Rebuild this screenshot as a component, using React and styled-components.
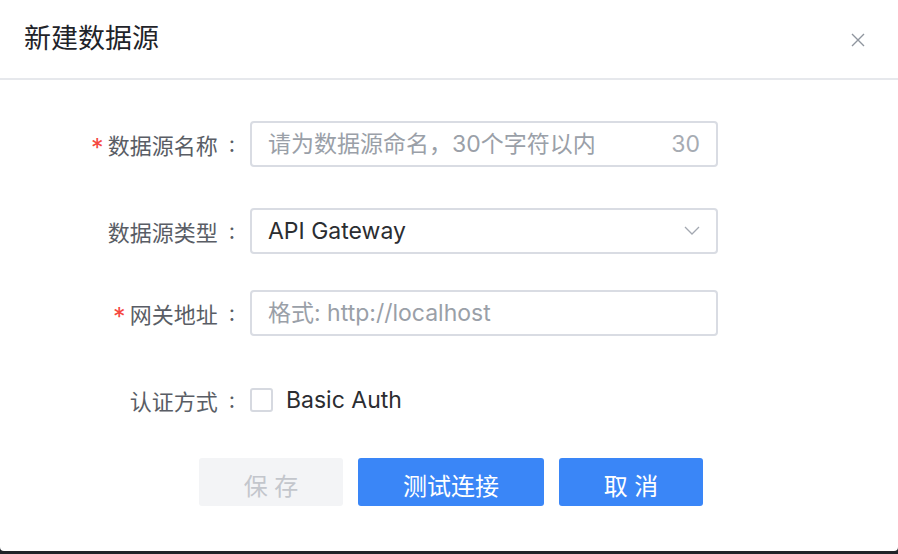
import styled, { createGlobalStyle } from "styled-components";

const GlobalStyle = createGlobalStyle`
  html, body {
    margin: 0;
    padding: 0;
    background: #1f2329;
  }
  body {
    font-family: Inter, "Noto Sans CJK SC", sans-serif;
  }
  * { box-sizing: border-box; }
`;

const Dialog = styled.div`
  width: 898px;
  height: 551px;
  background: #fff;
  border-radius: 0 0 4px 4px;
  display: flex;
  flex-direction: column;
`;

const Header = styled.header`
  height: 80px;
  padding: 0 24px;
  display: flex;
  align-items: center;
  justify-content: space-between;
  border-bottom: 2px solid #e6e8ec;
`;

const Title = styled.h2`
  margin: 0;
  font-size: 27px;
  font-weight: 400;
  color: #1f2329;
  line-height: 1;
  padding-bottom: 2px;
`;

const CloseButton = styled.button`
  border: 0;
  background: none;
  padding: 0;
  width: 16px;
  height: 16px;
  margin-right: 8px;
  margin-top: 2px;
  display: flex;
  cursor: pointer;
`;

const Body = styled.div`
  padding-top: 41px;
  display: flex;
  flex-direction: column;
`;

const Row = styled.div`
  display: flex;
  align-items: center;
  height: 46px;
  margin-bottom: ${(p) => p.$gap}px;
`;

const Label = styled.label`
  width: 237px;
  display: flex;
  justify-content: flex-end;
  align-items: center;
  font-size: 22px;
  color: #595d65;
  margin-right: 13px;
  padding-right: 2px;
  white-space: nowrap;
`;

const Colon = styled.span`
  margin-left: 11px;
`;

const Star = styled.span`
  color: #f5473f;
  font-size: 25px;
  margin-right: 4px;
  position: relative;
  top: 4px;
`;

const Field = styled.div`
  width: 468px;
  height: 46px;
  border: 2px solid #d9dce3;
  border-radius: 4px;
  display: flex;
  align-items: center;
  padding: 0 16px 0 16px;
  font-size: 23px;
  color: #2b2d31;
`;

const Input = styled.input`
  flex: 1;
  border: 0;
  outline: none;
  padding: 0;
  font: inherit;
  color: inherit;
  background: transparent;
  &::placeholder {
    color: #9aa0a8;
  }
`;

const Counter = styled.span`
  color: #a6abb3;
  font-size: 23px;
`;

const SelectValue = styled.span`
  flex: 1;
`;

const CheckBox = styled.span`
  width: 23px;
  height: 24px;
  border: 2px solid #d6d9e0;
  border-radius: 3px;
  margin-right: 13px;
`;

const CheckText = styled.span`
  font-size: 23px;
  color: #2b2d31;
`;

const Actions = styled.div`
  display: flex;
  justify-content: center;
  gap: 15px;
  padding-left: 4px;
`;

const Button = styled.button`
  width: ${(p) => p.$w}px;
  height: 48px;
  border: 0;
  border-radius: 3px;
  font-family: inherit;
  font-size: 24px;
  padding: 0;
  padding-top: 4px;
  background: ${(p) => (p.$primary ? "#3a86f7" : "#f3f4f6")};
  color: ${(p) => (p.$primary ? "#fff" : "#c3c6cc")};
  cursor: ${(p) => (p.disabled ? "not-allowed" : "pointer")};
`;

export default function App() {
  return (
    <>
      <GlobalStyle />
      <Dialog>
        <Header>
          <Title>新建数据源</Title>
          <CloseButton aria-label="close">
            <svg width="16" height="16" viewBox="0 0 16 16">
              <path d="M2 2 L14 14 M14 2 L2 14" stroke="#8f959e" strokeWidth="1.4" fill="none" />
            </svg>
          </CloseButton>
        </Header>
        <Body>
          <Row $gap={41}>
            <Label>
              <Star>*</Star>数据源名称<Colon>:</Colon>
            </Label>
            <Field>
              <Input placeholder="请为数据源命名，30个字符以内" />
              <Counter>30</Counter>
            </Field>
          </Row>
          <Row $gap={36}>
            <Label>
              数据源类型<Colon>:</Colon>
            </Label>
            <Field>
              <SelectValue>API Gateway</SelectValue>
              <svg width="16" height="10" viewBox="0 0 16 10">
                <path d="M1 1 L8 8 L15 1" stroke="#a3a8b1" strokeWidth="1.3" fill="none" />
              </svg>
            </Field>
          </Row>
          <Row $gap={41}>
            <Label>
              <Star>*</Star>网关地址<Colon>:</Colon>
            </Label>
            <Field>
              <Input placeholder="格式: http://localhost" />
            </Field>
          </Row>
          <Row $gap={35}>
            <Label>
              认证方式<Colon>:</Colon>
            </Label>
            <CheckBox />
            <CheckText>Basic Auth</CheckText>
          </Row>
          <Actions>
            <Button $w={144} disabled>保 存</Button>
            <Button $w={186} $primary>测试连接</Button>
            <Button $w={144} $primary>取 消</Button>
          </Actions>
        </Body>
      </Dialog>
    </>
  );
}
